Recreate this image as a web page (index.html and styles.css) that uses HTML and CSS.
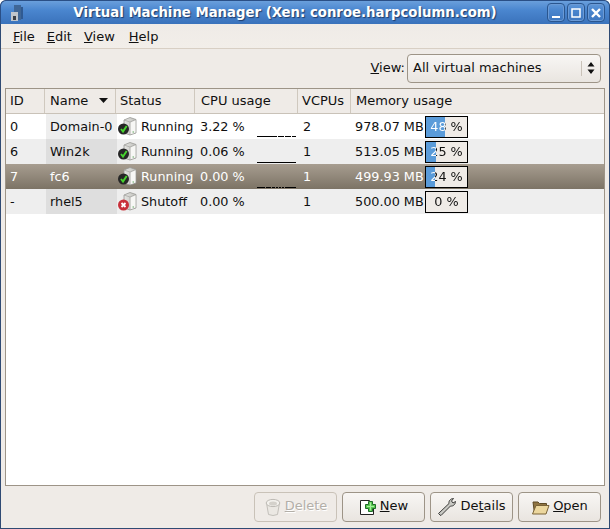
FILE: index.html
```html
<!DOCTYPE html>
<html lang="en">
<head>
<meta charset="utf-8">
<title>Virtual Machine Manager</title>
<link rel="stylesheet" href="styles.css">
</head>
<body>
<svg class="defs" width="0" height="0" aria-hidden="true">
  <defs>
    <linearGradient id="srv" x1="0" y1="0" x2="1" y2="0"><stop offset="0" stop-color="#e4e4e1"/><stop offset="1" stop-color="#c2c2be"/></linearGradient>
    <symbol id="server" viewBox="0 0 20 20">
      <path d="M6 3 L12 .5 L18 2.500 L18 16 L12 18 L6 16Z" fill="url(#srv)" stroke="#989894" stroke-width=".8"/>
      <path d="M6 3 L12 5 L18 2.500" fill="none" stroke="#a4a4a0" stroke-width=".7"/>
      <path d="M12 5 V18" stroke="#a8a8a4" stroke-width=".7"/>
      <path d="M12.700 5.500 L17.500 3.300 V15.600 L12.700 17.200Z" fill="#f7f7f5"/>
      <path d="M14.500 15h1.500" stroke="#5fa55f" stroke-width="1"/>
    </symbol>
    <symbol id="ok" viewBox="0 0 20 20">
      <use href="#server"/>
      <circle cx="5.500" cy="12" r="5.500" fill="#262626"/>
      <path d="M3 12 L5 14.500 L8.700 9" fill="none" stroke="#46d22e" stroke-width="2"/>
    </symbol>
    <symbol id="off" viewBox="0 0 20 20">
      <use href="#server"/>
      <circle cx="5.500" cy="13" r="5.500" fill="#c8303a"/>
      <path d="M3.500 11 L7.500 15 M7.500 11 L3.500 15" stroke="#fff" stroke-width="1.800"/>
    </symbol>
  </defs>
</svg>
<div class="window">
  <header class="titlebar">
    <svg class="appicon" width="16" height="18" viewBox="0 0 16 18"><path d="M5 1h7v15H5z" fill="#3f6696"/><path d="M2 8h7v9H2z" fill="#bfc5cc"/><path d="M4 12h3v4H4z" fill="#3b3f46"/><path d="M12 3h2v12h-2z" fill="#2f5a92"/></svg>
    <h1 class="title">Virtual Machine Manager (Xen: conroe.harpcolumn.com)</h1>
    <div class="wmbuttons">
      <span class="wmbtn"><svg width="14" height="14" viewBox="0 0 14 14"><path d="M3 10h8v2H3z" fill="#fff"/></svg></span>
      <span class="wmbtn"><svg width="14" height="14" viewBox="0 0 14 14"><path d="M3 3h8v8H3z" fill="none" stroke="#fff" stroke-width="1.500"/></svg></span>
      <span class="wmbtn"><svg width="14" height="14" viewBox="0 0 14 14"><path d="M3 3l8 8M11 3l-8 8" stroke="#fff" stroke-width="2.400"/></svg></span>
    </div>
  </header>
  <div class="content">
    <nav class="menubar">
      <span class="menu"><u>F</u>ile</span>
      <span class="menu"><u>E</u>dit</span>
      <span class="menu"><u>V</u>iew</span>
      <span class="menu"><u>H</u>elp</span>
    </nav>
    <div class="filter">
      <span class="filter-label"><u>V</u>iew:</span>
      <div class="combo">
        <span class="combo-text">All virtual machines</span>
        <span class="combo-arrows"><svg width="8" height="12" viewBox="0 0 8 12"><path d="M4 0l3.500 4.500h-7zM4 12L.5 7.500h7z" fill="#111"/></svg></span>
      </div>
    </div>
    <section class="list">
      <div class="row head">
        <span class="hc h-id">ID</span>
        <span class="hc h-name">Name <svg class="sort" width="9" height="5" viewBox="0 0 9 5"><path d="M0 0h9L4.500 5z" fill="#111"/></svg></span>
        <span class="hc h-status">Status</span>
        <span class="hc h-cpu">CPU usage</span>
        <span class="hc h-vcpu">VCPUs</span>
        <span class="hc h-mem">Memory usage</span>
      </div>
      <div class="row">
        <span class="c c-id">0</span><span class="c c-name sorted">Domain-0</span>
        <span class="c c-status"><svg class="vmicon" width="20" height="20"><use href="#ok"/></svg>Running</span>
        <span class="c c-cpu"><span class="pct">3.22 %</span><svg class="spark" width="39" height="24" viewBox="0 0 39 24"><path d="M0 21.500h20M21 21.500h6M28 21.500h6M35 21.500h4" stroke="#000"/></svg></span>
        <span class="c c-vcpu">2</span>
        <span class="c c-mem"><span class="mb">978.07 MB</span><span class="bar" style="--v:19px"><span class="fill"></span><span class="bar-text">48 %</span></span></span>
      </div>
      <div class="row alt">
        <span class="c c-id">6</span><span class="c c-name sorted">Win2k</span>
        <span class="c c-status"><svg class="vmicon" width="20" height="20"><use href="#ok"/></svg>Running</span>
        <span class="c c-cpu"><span class="pct">0.06 %</span><svg class="spark" width="39" height="24" viewBox="0 0 39 24"><path d="M0 22.500h39" stroke="#000"/></svg></span>
        <span class="c c-vcpu">1</span>
        <span class="c c-mem"><span class="mb">513.05 MB</span><span class="bar" style="--v:10px"><span class="fill"></span><span class="bar-text">25 %</span></span></span>
      </div>
      <div class="row selected">
        <span class="c c-id">7</span><span class="c c-name">fc6</span>
        <span class="c c-status"><svg class="vmicon" width="20" height="20"><use href="#ok"/></svg>Running</span>
        <span class="c c-cpu"><span class="pct">0.00 %</span><svg class="spark" width="39" height="24" viewBox="0 0 39 24"><path d="M0 22.500h8M9 22.500h5M15 22.500h3M19 22.500h2M22 22.500h2M25 22.500h2M28 22.500h11" stroke="#000"/></svg></span>
        <span class="c c-vcpu">1</span>
        <span class="c c-mem"><span class="mb">499.93 MB</span><span class="bar" style="--v:9px"><span class="fill"></span><span class="bar-text">24 %</span></span></span>
      </div>
      <div class="row alt">
        <span class="c c-id">-</span><span class="c c-name sorted">rhel5</span>
        <span class="c c-status"><svg class="vmicon" width="20" height="20"><use href="#off"/></svg>Shutoff</span>
        <span class="c c-cpu"><span class="pct">0.00 %</span></span>
        <span class="c c-vcpu">1</span>
        <span class="c c-mem"><span class="mb">500.00 MB</span><span class="bar" style="--v:0px"><span class="fill"></span><span class="bar-text">0 %</span></span></span>
      </div>
    </section>
    <footer class="actions">
      <button class="btn disabled" type="button">
        <svg width="18" height="18" viewBox="0 0 18 18"><path d="M2.500 5l2 11.500q4.500 2 9 0l2-11.500" fill="#ebe8e3" stroke="#c2bfb9"/><ellipse cx="9" cy="5" rx="6.800" ry="3.600" fill="#f3f1ed" stroke="#bdbab4"/><ellipse cx="9" cy="5.500" rx="4" ry="2" fill="#d4d1cb"/></svg>
        <span class="btn-label"><u>D</u>elete</span>
      </button>
      <button class="btn" type="button">
        <svg width="18" height="18" viewBox="0 0 18 18"><path d="M1.500 2.500h9l4 4v10h-13z" fill="#fff" stroke="#222"/><path d="M9.500 3.500h4v3h3v4h-3v3h-4v-3h-3v-4h3z" fill="#58c94f" stroke="#1f6b2a" stroke-linejoin="round"/><path d="M11.500 4.500v8M8 8.500h7" stroke="#a6eea0" stroke-width="1"/></svg>
        <span class="btn-label"><u>N</u>ew</span>
      </button>
      <button class="btn" type="button">
        <svg width="20" height="20" viewBox="0 0 20 20"><path d="M3 18L1.500 16.500 12 6.500C11.500 4 13.500 1.500 16.500 1.500L14.500 4l1.500 2 2.500-1.500C18.500 7.500 16 9.500 13.500 9L4 18.500z" fill="#c9c9c4" stroke="#3a3a38" stroke-linejoin="round"/></svg>
        <span class="btn-label">De<u>t</u>ails</span>
      </button>
      <button class="btn" type="button">
        <svg width="19" height="18" viewBox="0 0 19 18"><path d="M2 4h5l1.500 1.500h7v3H5l-1.500 7z" fill="#8f7442" stroke="#5e4a26"/><path d="M5 7.500h13l-3 8.500H1.500z" fill="#ecd79e" stroke="#7a6337"/></svg>
        <span class="btn-label"><u>O</u>pen</span>
      </button>
    </footer>
  </div>
</div>
</body>
</html>
```

FILE: styles.css
```css
* { box-sizing: border-box; }
html, body { margin: 0; padding: 0; }
body {
  width: 610px;
  height: 529px;
  overflow: hidden;
  background: #fff;
  font-family: "DejaVu Sans", sans-serif;
  font-size: 13px;
  color: #101010;
}
.defs { position: absolute; }
.window {
  width: 610px;
  height: 529px;
  display: flex;
  flex-direction: column;
  background: #2f4a73;
  border-radius: 6px 6px 0 0;
  overflow: hidden;
}
.titlebar {
  height: 24px;
  flex: none;
  display: flex;
  align-items: center;
  padding: 0 4px 0 8px;
  background: linear-gradient(#6a9fdc 0, #4a86cf 40%, #3a72bb 100%);
  border: 1px solid #2a4f86;
  border-bottom: 0;
  border-radius: 6px 6px 0 0;
}
.appicon { flex: none; }
.title {
  flex: 1;
  margin: 0;
  padding-right: 2px;
  text-align: center;
  font-size: 13.280px;
  font-weight: bold;
  color: #fff;
  text-shadow: 1px 1px 1px #1e3c6a;
  white-space: nowrap;
}
.wmbuttons { display: flex; gap: 2px; }
.wmbtn {
  width: 18px;
  height: 19px;
  display: flex;
  align-items: center;
  justify-content: center;
  border: 1px solid #2a568f;
  border-radius: 4px;
  box-shadow: inset 0 0 0 1px #6a9ad6;
}
.content {
  flex: 1;
  display: flex;
  flex-direction: column;
  margin: 0 1px 1px;
  min-height: 0;
  background: #efebe7;
}
.menubar {
  height: 25px;
  flex: none;
  display: flex;
  align-items: center;
  gap: 12px;
  padding: 0 12px;
  background: linear-gradient(#efebe7, #f2eee9);
  border-bottom: 1px solid #d8cfc4;
}
.menu:last-child { margin-left: 2px; }
.filter {
  height: 39px;
  flex: none;
  display: flex;
  align-items: center;
  justify-content: flex-end;
  gap: 2px;
  padding: 0 8px 1px;
}
.filter-label { padding-bottom: 2px; }
.combo {
  width: 194px;
  height: 29px;
  display: flex;
  align-items: center;
  border: 1px solid #9d9487;
  border-radius: 4px;
  background: linear-gradient(#f8f6f4, #e9e5e0);
}
.combo-text { flex: 1; padding: 0 0 2px 5px; }
.combo-arrows {
  width: 18px;
  height: 15px;
  margin-right: 1px;
  display: flex;
  align-items: center;
  justify-content: center;
  border-left: 1px solid #c9c2b8;
}
.list {
  flex: 1;
  margin: 0 4px;
  border: 1px solid #9d9487;
  background: #fff;
  min-height: 0;
}
.row {
  display: grid;
  grid-template-columns: 40px 71px 78px 102px 53px 1fr;
  height: 25px;
  align-items: stretch;
}
.row.head {
  grid-template-columns: 39px 71px 79px 103px 53px 1fr;
  background: #efebe7;
  border-bottom: 1px solid #c9c2b8;
}
.hc {
  display: flex;
  align-items: center;
  gap: 9px;
  padding: 0 0 2px 4px;
  border-right: 1px solid #cfc8be;
}
.hc:last-child { border-right: 0; }
.h-name { padding-left: 5px; }
.h-cpu { padding-left: 6px; }
.h-mem { padding-left: 5px; }
.c { display: flex; align-items: center; padding-left: 4px; white-space: nowrap; font-size: 12.800px; }
.c.c-status { padding-left: 1px; }
.c.c-cpu { padding-left: 5px; }
.c.c-vcpu { padding-left: 6px; }
.c.c-mem { padding-left: 5px; }
.sort { margin-left: 2px; }
.row.alt { background: #eeeeee; }
.sorted { background: #eeeeee; }
.row.alt .sorted { background: #dedede; }
.row.selected {
  background: linear-gradient(#a79d90, #7c7365);
  color: #fff;
}
.vmicon { flex: none; margin-right: 3px; }
.pct { flex: none; width: 57px; }
.spark { flex: none; }
.mb { flex: none; width: 70px; }
.bar {
  position: relative;
  width: 43px;
  height: 22px;
  border: 1px solid #000;
  background: #efebe7;
}
.fill { position: absolute; left: 0; top: 0; bottom: 0; width: var(--v); background: #5a9bd9; }
.bar-text {
  position: absolute;
  inset: 0;
  display: flex;
  align-items: center;
  justify-content: center;
  color: transparent;
  background: linear-gradient(90deg, #fff var(--v), #101010 var(--v));
  -webkit-background-clip: text;
  background-clip: text;
}
.actions {
  height: 42px;
  flex: none;
  display: flex;
  justify-content: flex-end;
  align-items: center;
  gap: 5px;
  padding: 0 8px 1px;
}
.btn {
  height: 30px;
  width: 83px;
  display: flex;
  align-items: center;
  justify-content: center;
  gap: 3px;
  padding: 0;
  font: inherit;
  color: #101010;
  border: 1px solid #9d9487;
  border-radius: 4px;
  background: linear-gradient(#f8f6f4, #e9e5e0);
}
.btn-label { padding-bottom: 2px; }
.btn.disabled { color: #b3afa8; border-color: #c9c2b8; background: #efebe7; text-shadow: 1px 1px 0 #fff; }
```
